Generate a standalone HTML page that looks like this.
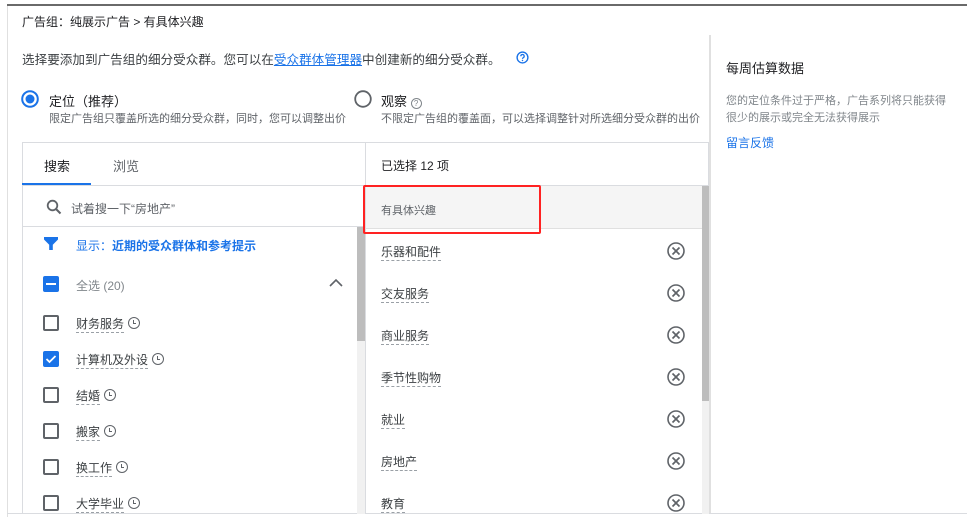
<!DOCTYPE html>
<html><head><meta charset="utf-8"><style>
*{margin:0;padding:0;box-sizing:border-box}
body{width:970px;height:517px;overflow:hidden;background:#fff;font-family:"Liberation Sans","Noto Sans CJK SC",sans-serif;color:#3c4043;position:relative}
.a{position:absolute;white-space:nowrap}
.t12{font-size:12px}.t13{font-size:13px}
.u{border-bottom:1px dashed #9aa0a6;padding-bottom:1px}
.cb{position:absolute;width:16px;height:16px;border:2px solid #5f6368;border-radius:2px}
.clk{display:inline-block;width:12px;height:12px;border:1.7px solid #5f6368;border-radius:50%;position:relative;vertical-align:-1px;margin-left:4px}
.clk:after{content:"";position:absolute;left:3.5px;top:1.5px;width:2.5px;height:3.5px;border-left:1.6px solid #5f6368;border-bottom:1.6px solid #5f6368}
.x{position:absolute;left:667px;width:18px;height:18px}
</style></head><body>
<div class="a" style="left:7px;top:4px;width:960px;height:2px;background:#6a6a6a"></div>
<div class="a" style="left:7px;top:6px;width:1px;height:511px;background:#e0e0e0"></div>
<div class="a" style="left:7px;top:513px;width:960px;height:1px;background:#dadce0"></div>
<div class="a t12" style="left:22px;top:13px;color:#202124">广告组：纯展示广告 &gt; 有具体兴趣</div>
<div class="a" style="left:22px;top:49px;font-size:12.6px;color:#3c4043">选择要添加到广告组的细分受众群。您可以在<span style="color:#1a73e8;text-decoration:underline">受众群体管理器</span>中创建新的细分受众群。</div>
<svg class="a" style="left:516px;top:51px" width="13" height="13" viewBox="0 0 14 14"><circle cx="7" cy="7" r="5.8" fill="none" stroke="#1a73e8" stroke-width="1.5"/><path d="M5.2 5.6a1.8 1.8 0 1 1 2.6 1.6c-.6.3-.8.6-.8 1.3" fill="none" stroke="#1a73e8" stroke-width="1.4"/><circle cx="7" cy="10.2" r=".8" fill="#1a73e8"/></svg>
<svg class="a" style="left:21px;top:90px" width="18" height="18"><circle cx="9" cy="9" r="7.8" fill="none" stroke="#1a73e8" stroke-width="2"/><circle cx="9" cy="9" r="4.5" fill="#1a73e8"/></svg>
<div class="a t13" style="left:49px;top:91px;color:#202124">定位（推荐）</div>
<div class="a" style="left:49px;top:110px;font-size:11px;color:#5f6368">限定广告组只覆盖所选的细分受众群，同时，您可以调整出价</div>
<svg class="a" style="left:354px;top:90px" width="18" height="18"><circle cx="9" cy="9" r="7.8" fill="none" stroke="#5f6368" stroke-width="1.8"/></svg>
<div class="a t13" style="left:381px;top:91px;color:#202124">观察 <span style="display:inline-block;width:11px;height:11px;border:1px solid #80868b;border-radius:50%;font-size:8px;line-height:9px;text-align:center;color:#80868b;vertical-align:0">?</span></div>
<div class="a" style="left:381px;top:110px;font-size:11px;color:#5f6368">不限定广告组的覆盖面，可以选择调整针对所选细分受众群的出价</div>
<div class="a" style="left:22px;top:142px;width:687px;height:372px;border:1px solid #dadce0;border-bottom:none"></div>
<div class="a" style="left:365px;top:142px;width:1px;height:372px;background:#dadce0"></div>
<div class="a" style="left:22px;top:185px;width:687px;height:1px;background:#dadce0"></div>
<div class="a" style="left:22px;top:226px;width:343px;height:1px;background:#dadce0"></div>
<div class="a t13" style="left:44px;top:156px;color:#202124">搜索</div>
<div class="a t13" style="left:113px;top:156px;color:#5f6368">浏览</div>
<div class="a" style="left:22px;top:183px;width:69px;height:2px;background:#1a73e8"></div>
<svg class="a" style="left:46px;top:199px" width="16" height="16"><circle cx="6.5" cy="6.5" r="4.8" fill="none" stroke="#5f6368" stroke-width="1.8"/><path d="M10 10l4.5 4.5" stroke="#5f6368" stroke-width="2"/></svg>
<div class="a t12" style="left:71px;top:200px;color:#5f6368">试着搜一下“房地产”</div>
<div class="a" style="left:357px;top:227px;width:8px;height:287px;background:#f1f1f1"></div>
<div class="a" style="left:357px;top:227px;width:8px;height:114px;background:#bdbdbd"></div>
<svg class="a" style="left:44px;top:236px" width="14" height="14"><path d="M0 1h14v2.5L8.8 8.8V14H5.2V8.8L0 3.5z" fill="#1a73e8"/></svg>
<div class="a t12" style="left:76px;top:237px;color:#1a73e8;font-weight:bold"><span style="font-weight:normal">显示：</span>近期的受众群体和参考提示</div>
<div class="a" style="left:43px;top:276px;width:16px;height:16px;background:#1a73e8;border-radius:2px"><div style="position:absolute;left:3px;top:7px;width:10px;height:2px;background:#fff"></div></div>
<div class="a t12" style="left:76px;top:277px;color:#80868b">全选 (20)</div>
<svg class="a" style="left:329px;top:278px" width="14" height="10"><path d="M1 8l6-6 6 6" fill="none" stroke="#5f6368" stroke-width="1.6"/></svg>
<div class="cb" style="left:43px;top:315px"></div><div class="a t12" style="left:76px;top:315px"><span class="u">财务服务</span><span class="clk"></span></div>
<div class="a" style="left:43px;top:351px;width:16px;height:16px;background:#1a73e8;border-radius:2px"><svg width="16" height="16"><path d="M3.5 8l3 3 6-6" fill="none" stroke="#fff" stroke-width="1.8"/></svg></div><div class="a t12" style="left:76px;top:351px"><span class="u">计算机及外设</span><span class="clk"></span></div>
<div class="cb" style="left:43px;top:387px"></div><div class="a t12" style="left:76px;top:387px"><span class="u">结婚</span><span class="clk"></span></div>
<div class="cb" style="left:43px;top:423px"></div><div class="a t12" style="left:76px;top:423px"><span class="u">搬家</span><span class="clk"></span></div>
<div class="cb" style="left:43px;top:459px"></div><div class="a t12" style="left:76px;top:459px"><span class="u">换工作</span><span class="clk"></span></div>
<div class="cb" style="left:43px;top:495px"></div><div class="a t12" style="left:76px;top:495px"><span class="u">大学毕业</span><span class="clk"></span></div>
<div class="a t12" style="left:381px;top:157px;color:#202124">已选择 12 项</div>
<div class="a" style="left:366px;top:186px;width:336px;height:43px;background:#f5f5f5;border-bottom:1px solid #e0e0e0"></div>
<div class="a" style="left:363px;top:185px;width:178px;height:49px;border:2px solid #f22;border-radius:2px"></div>
<div class="a" style="left:381px;top:202px;font-size:11px;color:#5f6368">有具体兴趣</div>
<div class="a" style="left:702px;top:186px;width:7px;height:328px;background:#f1f1f1"></div>
<div class="a" style="left:702px;top:186px;width:7px;height:215px;background:#bdbdbd"></div>
<div class="a t12" style="left:381px;top:243px"><span class="u">乐器和配件</span></div>
<div class="a t12" style="left:381px;top:285px"><span class="u">交友服务</span></div>
<div class="a t12" style="left:381px;top:327px"><span class="u">商业服务</span></div>
<div class="a t12" style="left:381px;top:369px"><span class="u">季节性购物</span></div>
<div class="a t12" style="left:381px;top:411px"><span class="u">就业</span></div>
<div class="a t12" style="left:381px;top:453px"><span class="u">房地产</span></div>
<div class="a t12" style="left:381px;top:495px"><span class="u">教育</span></div>
<svg class="x" style="top:242px" viewBox="0 0 18 18"><circle cx="9" cy="9" r="8" fill="none" stroke="#5f6368" stroke-width="1.6"/><path d="M5.5 5.5l7 7M12.5 5.5l-7 7" stroke="#5f6368" stroke-width="1.7"/></svg>
<svg class="x" style="top:284px" viewBox="0 0 18 18"><circle cx="9" cy="9" r="8" fill="none" stroke="#5f6368" stroke-width="1.6"/><path d="M5.5 5.5l7 7M12.5 5.5l-7 7" stroke="#5f6368" stroke-width="1.7"/></svg>
<svg class="x" style="top:326px" viewBox="0 0 18 18"><circle cx="9" cy="9" r="8" fill="none" stroke="#5f6368" stroke-width="1.6"/><path d="M5.5 5.5l7 7M12.5 5.5l-7 7" stroke="#5f6368" stroke-width="1.7"/></svg>
<svg class="x" style="top:368px" viewBox="0 0 18 18"><circle cx="9" cy="9" r="8" fill="none" stroke="#5f6368" stroke-width="1.6"/><path d="M5.5 5.5l7 7M12.5 5.5l-7 7" stroke="#5f6368" stroke-width="1.7"/></svg>
<svg class="x" style="top:410px" viewBox="0 0 18 18"><circle cx="9" cy="9" r="8" fill="none" stroke="#5f6368" stroke-width="1.6"/><path d="M5.5 5.5l7 7M12.5 5.5l-7 7" stroke="#5f6368" stroke-width="1.7"/></svg>
<svg class="x" style="top:452px" viewBox="0 0 18 18"><circle cx="9" cy="9" r="8" fill="none" stroke="#5f6368" stroke-width="1.6"/><path d="M5.5 5.5l7 7M12.5 5.5l-7 7" stroke="#5f6368" stroke-width="1.7"/></svg>
<svg class="x" style="top:494px" viewBox="0 0 18 18"><circle cx="9" cy="9" r="8" fill="none" stroke="#5f6368" stroke-width="1.6"/><path d="M5.5 5.5l7 7M12.5 5.5l-7 7" stroke="#5f6368" stroke-width="1.7"/></svg>
<div class="a" style="left:709px;top:35px;width:2px;height:478px;background:#e0e0e0"></div>
<div class="a t13" style="left:726px;top:58px;color:#202124">每周估算数据</div>
<div class="a" style="left:726px;top:93px;font-size:11px;line-height:17px;color:#80868b">您的定位条件过于严格，广告系列将只能获得<br>很少的展示或完全无法获得展示</div>
<div class="a t12" style="left:726px;top:134px;color:#1a73e8">留言反馈</div>
</body></html>
